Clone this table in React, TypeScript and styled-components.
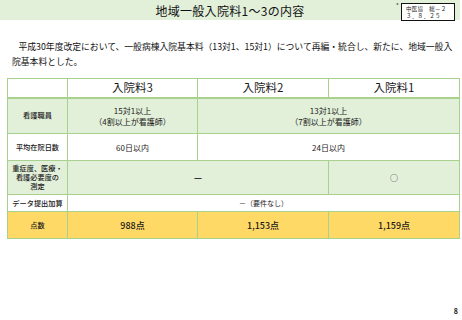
import React from "react";
import styled, { createGlobalStyle } from "styled-components";

const Global = createGlobalStyle`
  html, body { margin: 0; padding: 0; background: #ffffff; }
  body { font-family: "Noto Sans CJK JP", "Noto Sans", sans-serif; color: #1a1a1a; }
`;

const Page = styled.div`
  position: relative;
  width: 462px;
  height: 320px;
  overflow: hidden;
  background: #ffffff;
`;

const TitleBar = styled.div`
  height: 20px;
  margin-right: 2px;
  background: #e2efd9;
  display: flex;
  align-items: center;
  justify-content: center;
  font-size: 12px;
  font-weight: 400;
  color: #111;
  letter-spacing: 0.3px;
`;

const Badge = styled.div`
  position: absolute;
  top: 3px;
  left: 401px;
  width: 54px;
  height: 18px;
  border: 1px solid #111;
  background: #ffffff;
  font-size: 5.5px;
  line-height: 7px;
  padding: 1.5px 0 0 4px;
  box-sizing: border-box;
  color: #222;
  white-space: pre;
  letter-spacing: 0.3px;
`;

const Mark = styled.span`
  position: absolute;
  top: 1px;
  left: 396px;
  font-size: 6px;
  color: #333;
`;

const Lead = styled.p`
  margin: 20px 0 0 0;
  padding-left: 12px;
  font-size: 8.8px;
  line-height: 14.5px;
  white-space: nowrap;
  color: #111;
`;

const Indent = styled.span`
  display: inline-block;
  width: 6.5px;
`;

const Table = styled.table`
  margin: 9px 0 0 7px;
  border-collapse: collapse;
  table-layout: fixed;
  width: 452px;
`;

type RowKind = "white" | "green" | "yellow";

const bg: Record<RowKind, string> = {
  white: "#ffffff",
  green: "#e2efd9",
  yellow: "#ffd966",
};

const Row = styled.tr<{ $kind: RowKind; $h: number }>`
  background: ${(p) => bg[p.$kind]};
  height: ${(p) => p.$h}px;
`;

const Cell = styled.td<{ $size?: number; $lh?: number; $weight?: number }>`
  border: 1.5px solid #a9d18e;
  padding: 0;
  text-align: center;
  vertical-align: middle;
  font-size: ${(p) => p.$size ?? 8}px;
  line-height: ${(p) => p.$lh ?? 11}px;
  font-weight: ${(p) => p.$weight ?? 400};
  color: #1a1a1a;
`;

const HeadCell = styled(Cell)`
  border-bottom-width: 2.5px;
`;

const LabelCell = styled(Cell)`
  font-size: 7.2px;
  line-height: 9px;
  font-weight: 500;
  padding: 0 1px;
`;

const PageNo = styled.div`
  position: absolute;
  right: 4px;
  bottom: 4px;
  font-size: 7px;
  font-weight: 700;
  color: #222;
`;

export default function App() {
  return (
    <>
      <Global />
      <Page>
        <TitleBar>地域一般入院料1～3の内容</TitleBar>
        <Mark>*</Mark>
        <Badge>{"中医協　総－２\n３．８．２５"}</Badge>
        <Lead>
          <Indent />
          平成30年度改定において、一般病棟入院基本料（13対1、15対1）について再編・統合し、新たに、地域一般入
          <br />
          院基本料とした。
        </Lead>
        <Table>
          <colgroup>
            <col style={{ width: 60 }} />
            <col style={{ width: 130 }} />
            <col style={{ width: 131 }} />
            <col style={{ width: 131 }} />
          </colgroup>
          <tbody>
            <Row $kind="white" $h={19}>
              <HeadCell />
              <HeadCell $size={11.5}>入院料3</HeadCell>
              <HeadCell $size={11.5}>入院料2</HeadCell>
              <HeadCell $size={11.5}>入院料1</HeadCell>
            </Row>
            <Row $kind="green" $h={36}>
              <LabelCell>看護職員</LabelCell>
              <Cell>
                15対1以上
                <br />
                （4割以上が看護師）
              </Cell>
              <Cell colSpan={2}>
                13対1以上
                <br />
                （7割以上が看護師）
              </Cell>
            </Row>
            <Row $kind="white" $h={27}>
              <LabelCell>平均在院日数</LabelCell>
              <Cell>60日以内</Cell>
              <Cell colSpan={2}>24日以内</Cell>
            </Row>
            <Row $kind="green" $h={34}>
              <LabelCell>
                重症度、医療・
                <br />
                看護必要度の
                <br />
                測定
              </LabelCell>
              <Cell colSpan={2} $size={10} $weight={500}>－</Cell>
              <Cell $size={8}>○</Cell>
            </Row>
            <Row $kind="white" $h={17}>
              <LabelCell $size={7}>データ提出加算</LabelCell>
              <Cell colSpan={3} $size={7}>－（要件なし）</Cell>
            </Row>
            <Row $kind="yellow" $h={27}>
              <LabelCell $size={9}>点数</LabelCell>
              <Cell $size={9} $weight={500}>988点</Cell>
              <Cell $size={9} $weight={500}>1,153点</Cell>
              <Cell $size={9} $weight={500}>1,159点</Cell>
            </Row>
          </tbody>
        </Table>
        <PageNo>8</PageNo>
      </Page>
    </>
  );
}
